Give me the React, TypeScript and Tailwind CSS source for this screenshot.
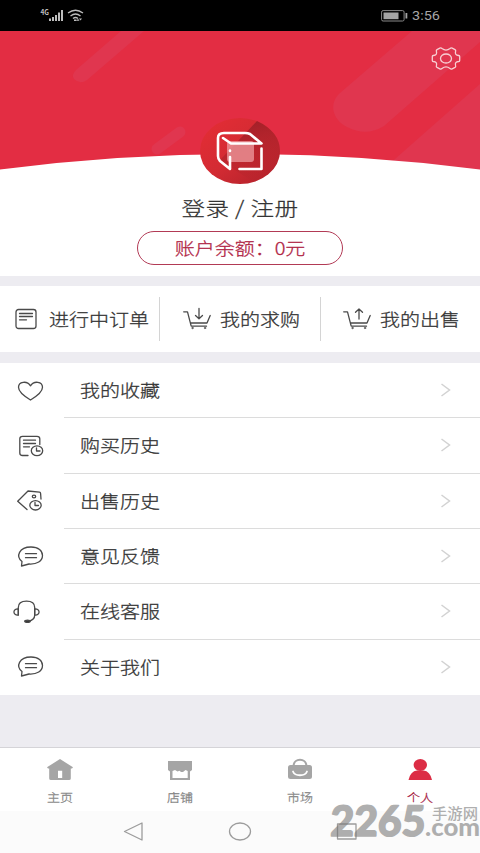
import type { ReactNode } from 'react';

const line = {
  fill: 'none',
  stroke: '#4a4a4a',
  strokeWidth: 1.3,
  strokeLinecap: 'round' as const,
  strokeLinejoin: 'round' as const,
};

function Label({ children, className = '' }: { children: ReactNode; className?: string }) {
  return (
    <span className={`inline-block scale-y-[0.84] whitespace-nowrap [-webkit-text-stroke:0.3px_currentColor] ${className}`}>
      {children}
    </span>
  );
}

function RowIcon({ children }: { children: ReactNode }) {
  return (
    <svg className="ml-[10px] h-7 w-9 shrink-0" viewBox="0 0 36 28" {...line}>
      {children}
    </svg>
  );
}

const Bubble = () => (
  <RowIcon>
    <path d="M12 18.500C5.500 13.500 9 4 21 4C28.500 4 32.500 7.800 32.500 12.500C32.500 18 27 21.500 19 21L11.500 23Z" />
    <path d="M15.500 10.700H26.500M15.500 14.700H26.500" />
  </RowIcon>
);

const rows = [
  {
    text: '我的收藏',
    icon: (
      <RowIcon>
        <path d="M20.500 23C13 18.500 8.500 14 8.500 10.300C8.500 4.500 17 3.300 20.500 8.800C24 3.300 32.500 4.500 32.500 10.300C32.500 14 28 18.500 20.500 23Z" />
      </RowIcon>
    ),
  },
  {
    text: '购买历史',
    icon: (
      <RowIcon>
        <path d="M18 23.500H12.500Q9.800 23.500 9.800 21V6.800Q9.800 4.300 12.500 4.300H27Q29.800 4.300 29.800 6.800V12.500M13.500 8.200H25.500M13.500 11.500H25.500M13.500 14.800H19.500" />
        <ellipse cx="27" cy="18.800" rx="5.700" ry="4.900" />
        <path d="M26.500 15.800V19H30" />
      </RowIcon>
    ),
  },
  {
    text: '出售历史',
    icon: (
      <RowIcon>
        <path d="M17 22.500L7.700 14.200L18 4L29.500 5.200Q30.500 5.300 30.600 6.500L31 12" />
        <ellipse cx="24" cy="9.500" rx="1.700" ry="1.400" />
        <ellipse cx="25.500" cy="18.300" rx="5.700" ry="4.700" />
        <path d="M25 15.500V18.500H28.500" />
      </RowIcon>
    ),
  },
  { text: '意见反馈', icon: <Bubble /> },
  {
    text: '在线客服',
    icon: (
      <RowIcon>
        <path d="M8.300 17V9.500Q8.300 3.200 16.500 3.200Q24.700 3.200 24.700 9.500V17Q24.700 22 18.500 23.200" />
        <path d="M8.300 11C2.500 10.500 2.500 17.700 8.300 17ZM24.700 11C30.500 10.500 30.500 17.700 24.700 17Z" />
        <ellipse cx="17.500" cy="23.300" rx="2.800" ry="1.100" fill="#333" />
      </RowIcon>
    ),
  },
  { text: '关于我们', icon: <Bubble /> },
];

function Cart({ up = false }: { up?: boolean }) {
  return (
    <svg className="h-6 w-7 shrink-0" viewBox="0 0 28 24" {...line}>
      <path d="M.7 4.800H4.500L8.200 19.200H23.500M7.500 16H24L27.200 8.500" />
      <path d={up ? 'M16 12V2M12.500 5.200L16 2L19.500 5.200' : 'M16 1.500V11.500M12.500 8.500L16 11.700L19.500 8.500'} />
      <circle cx="9.500" cy="21" r=".8" fill="#444" strokeWidth=".5" />
      <circle cx="22" cy="21" r=".8" fill="#444" strokeWidth=".5" />
    </svg>
  );
}

const tabs = [
  {
    text: '主页',
    icon: <path fillRule="evenodd" d="M14 1L27 9.300L26 10.500H24.800V20.500Q24.800 22 23 22H5Q3.200 22 3.200 20.500V10.500H2L1 9.300ZM12 12.800V20H16.200V12.800Z" />,
  },
  {
    text: '店铺',
    icon: <path fillRule="evenodd" d="M2 3H26V12L24 13.500V22H4V13.500L2 12ZM6.500 13V20H21.700V13L19.500 12L17 14H15L13.500 12.800L11.500 13.500L9 12Z" />,
  },
  {
    text: '市场',
    icon: (
      <>
        <path d="M7.500 8C8 -.3 20 -.3 20.500 8" fill="none" stroke="#a5a5a5" strokeWidth="2" />
        <rect x="2" y="7" width="24" height="14" rx="2.500" />
        <path d="M7 13.500C9 18.500 19 18.500 21 13.500" fill="none" stroke="white" strokeWidth="1.800" strokeLinecap="round" />
      </>
    ),
  },
  {
    text: '个人',
    icon: (
      <>
        <ellipse cx="14.300" cy="7" rx="6.700" ry="6" />
        <path d="M2.500 22Q4.500 13 11 12.500H17.500Q24 13 26 22Z" />
      </>
    ),
  },
];

function Hero() {
  return (
    <svg className="block h-[155px] w-[480px]" viewBox="0 31 480 155">
      <defs>
        <linearGradient id="ball" x1="0" y1="0" x2="1" y2="1">
          <stop offset="0" stopColor="#e62d35" />
          <stop offset=".5" stopColor="#d32b33" />
          <stop offset="1" stopColor="#ad2029" />
        </linearGradient>
        <linearGradient id="shade" x1=".3" y1="0" x2=".6" y2="1">
          <stop offset="0" stopColor="#9d1f27" />
          <stop offset="1" stopColor="#b9252d" stopOpacity=".2" />
        </linearGradient>
      </defs>
      <rect y="31" width="480" height="150" fill="#e32d43" />
      <g fill="#e0364f">
        <path d="M412 31H480V42L384 126Q366 137 347 127C333 120 328 104 340 93Z" />
        <path d="M480 84V180H372L395 159Z" />
        <path d="M121 31H144L87 80Q80 85 74 79Q71 75 76 70Z" />
        <path d="M157 149L180 132" stroke="#e0364f" strokeWidth="11" strokeLinecap="round" />
      </g>
      <path d="M0 169.500Q240 138.500 480 169.500V187H0Z" fill="white" />
      <ellipse cx="240" cy="151" rx="40" ry="33" fill="url(#ball)" />
      <path d="M257 121Q280 132 280 151C280 165 269 177 253 182L220 160Z" fill="url(#shade)" />
      <rect x="227" y="141" width="27" height="21" rx="3" fill="#ef9ca0" opacity=".75" />
      <g fill="none" stroke="white" strokeWidth="2.600" strokeLinecap="round" strokeLinejoin="round">
        <path d="M230 157V169L220 161Q218 159 218 156V138Q218 133 224 133H245Q248 133 250 134L261.500 143.500H231L223 138" />
        <path d="M261.500 148.500V169H239.500M230 150.500V151" />
      </g>
      <g fill="none" stroke="#f8cfd4" strokeWidth="1.300" strokeLinejoin="round">
        <path d="M439.800 48.200Q441 47.600 442 48.500Q446 51.800 450 48.500Q451 47.600 452.200 48.200L455 49.600Q456 50.200 455.600 51.300C454.800 54 456 55.200 458.700 55.500Q459.700 55.700 459.700 56.600V60.400Q459.700 61.300 458.700 61.500C456 61.800 454.800 63 455.600 65.700Q456 66.800 455 67.400L452.200 68.800Q451 69.400 450 68.500Q446 65.200 442 68.500Q441 69.400 439.800 68.800L437 67.400Q436 66.800 436.400 65.700C437.200 63 436 61.800 433.300 61.500Q432.300 61.300 432.300 60.400V56.600Q432.300 55.700 433.300 55.500C436 55.200 437.200 54 436.400 51.300Q436 50.200 437 49.600Z" />
        <ellipse cx="446" cy="58.500" rx="5.500" ry="4.500" />
      </g>
    </svg>
  );
}

function StatusBar() {
  return (
    <div className="flex h-[31px] items-center bg-black pl-[40px] pr-[39px] text-[#a5a5a5]">
      <svg className="h-[31px] w-[46px]" viewBox="40 0 46 31" fill="#bdbdbd">
        <text x="40.500" y="14.500" fontSize="7" fontWeight="700" textLength="8.500" lengthAdjust="spacingAndGlyphs">4G</text>
        <path d="M49 18.500h2V21h-2zM52 17h2v4h-2zM55 15h2v6h-2zM58 12.500h2V21h-2zM61 10h2V21h-2z" />
        <path d="M68 13Q75.500 7.500 83 13M70.500 16Q75.500 12 80.500 16M73 18.500Q75.500 16.500 78 18.500" fill="none" stroke="#bdbdbd" strokeWidth="1.300" />
        <path d="M74 19.500h2.500v1.500H74zM78 18.700l1.500 2h-3zM80.500 20.500l1.500-2h-3z" />
      </svg>
      <svg className="ml-auto mr-[4px] h-[12px] w-[27px]" viewBox="0 0 27 12" fill="none">
        <rect x=".6" y=".6" width="22.500" height="10.400" rx="1.500" stroke="#8a8a8a" />
        <rect x="2.500" y="2.500" width="15" height="6.700" fill="#a5a5a5" />
        <rect x="24.500" y="3" width="1.800" height="5.500" fill="#a5a5a5" />
      </svg>
      <span className="inline-block w-[29px] origin-left translate-y-[1px] scale-y-[0.94] whitespace-nowrap font-[Roboto] text-[14.500px] font-normal leading-none">3:56</span>
    </div>
  );
}

export default function App() {
  return (
    <div className="relative flex h-[853px] w-[480px] flex-col overflow-hidden bg-[#edecf1] font-['Noto_Sans_CJK_SC',sans-serif] font-light text-[#333]">
      <StatusBar />
      <header className="flex h-[244.500px] shrink-0 flex-col items-center bg-white">
        <Hero />
        <div className="flex h-[44px] items-center text-[23.500px] leading-none">
          <Label className="tracking-[0.500px]">登录 / 注册</Label>
        </div>
        <div className="mt-[1px] flex h-[34px] w-[206px] items-center justify-center rounded-full border-[1.500px] border-[#b23a55] text-[20px] leading-none text-[#b02444]">
          <Label>账户余额：0元</Label>
        </div>
      </header>

      <nav className="mt-[10.500px] flex h-[66px] shrink-0 items-center bg-white text-[20px] leading-none">
        <div className="flex h-11 w-[160px] items-center border-r-[1.500px] border-[#d4d4d4] pl-[15px]">
          <svg className="h-[22px] w-[22px] shrink-0" viewBox="0 0 22 22" {...line}>
            <rect x="1" y="1.500" width="20" height="19" rx="2.500" />
            <path d="M4.500 5.500H17.500M4.500 8.500H17.500M4.500 11.800H11.500" />
          </svg>
          <Label className="ml-[12px]">进行中订单</Label>
        </div>
        <div className="flex h-11 w-[161px] items-center border-r-[1.500px] border-[#d4d4d4] pl-[23px]">
          <Cart />
          <Label className="ml-[9px]">我的求购</Label>
        </div>
        <div className="flex h-11 flex-1 items-center pl-[22px]">
          <Cart up />
          <Label className="ml-[9px]">我的出售</Label>
        </div>
      </nav>

      <main className="mt-[11px] flex h-[332px] shrink-0 flex-col bg-white text-[20px] leading-none">
        {rows.map((row, i) => (
          <div key={row.text} className="flex flex-1 items-center">
            {row.icon}
            <div className={`ml-[18px] flex flex-1 items-center self-stretch pl-4 pr-[29px] ${i < rows.length - 1 ? 'border-b border-[#dcdcdc]' : ''}`}>
              <Label>{row.text}</Label>
              <svg className="ml-auto h-[14px] w-[11px]" viewBox="0 0 11 14" fill="none" stroke="#d2d2d2" strokeWidth="1.500">
                <path d="M1.500 1L9.500 7L1.500 13" />
              </svg>
            </div>
          </div>
        ))}
      </main>

      <footer className="mt-auto h-[106px] shrink-0 border-t border-[#d5d4d8] bg-white">
        <div className="grid h-[63px] grid-cols-4">
          {tabs.map((tab, i) => (
            <div key={tab.text} className={`flex flex-col items-center pt-[10px] ${i === 3 ? 'text-[#dc2d45]' : 'text-[#a5a5a5]'}`}>
              <svg className="h-6 w-7 shrink-0" viewBox="0 0 28 24" fill="currentColor">
                {tab.icon}
              </svg>
              <Label className={`mt-[9px] text-[13px] leading-none ${i === 3 ? 'text-[#a82445]' : 'text-[#858585]'}`}>{tab.text}</Label>
            </div>
          ))}
        </div>
        <div className="h-[42px] bg-[#fbfbfb]">
          <svg className="block h-full w-full" viewBox="0 811 480 42" fill="none" stroke="#9c9c9c" strokeWidth="1.300" strokeLinejoin="round">
            <path d="M124.500 831.500L142 823V840Z" />
            <ellipse cx="240" cy="831.500" rx="10.500" ry="8.500" />
            <rect x="337.500" y="824" width="18.500" height="15" />
          </svg>
        </div>
      </footer>

      <svg className="pointer-events-none absolute bottom-0 right-0 h-[58px] w-[160px]" viewBox="320 795 160 58" fill="#777" opacity=".58">
        <text transform="translate(330 836) skewX(-2)" fontFamily="Lato, sans-serif" fontWeight="900" fontSize="42" textLength="95" lengthAdjust="spacingAndGlyphs" stroke="#777" strokeWidth="1.500" strokeLinejoin="round">2265</text>
        <text x="432" y="819" fontFamily="Noto Sans CJK SC, sans-serif" fontWeight="500" fontSize="14.500" textLength="46" lengthAdjust="spacingAndGlyphs">手游网</text>
        <text x="425" y="835.500" fontFamily="Lato, sans-serif" fontWeight="900" fontSize="24" textLength="55" lengthAdjust="spacingAndGlyphs">.com</text>
      </svg>
    </div>
  );
}
